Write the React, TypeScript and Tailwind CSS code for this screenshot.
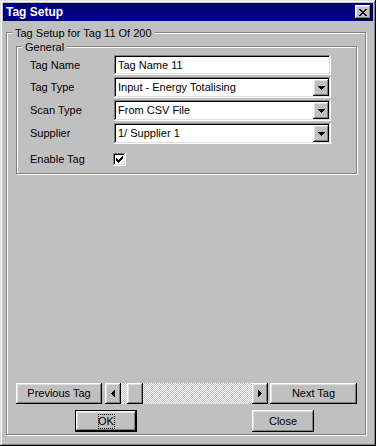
import React from 'react';

const raised =
    'shadow-[inset_-1px_-1px_#000,inset_1px_1px_#fff,inset_-2px_-2px_#808080,inset_2px_2px_#dfdfdf]';
const sunken =
    'shadow-[inset_-1px_-1px_#fff,inset_1px_1px_#808080,inset_-2px_-2px_#dfdfdf,inset_2px_2px_#000]';
const etched = 'border border-[#808080] shadow-[inset_1px_1px_#fff,1px_1px_#fff]';

// pixel glyphs drawn as tiny rect grids
const Pixels = ({ rows }: { rows: string[] }) => (
    <svg width={rows[0].length} height={rows.length} shapeRendering="crispEdges">
        {rows.map((r, y) =>
            r.split('').map((c, x) => (c === 'X' ? <rect key={x + '-' + y} x={x} y={y} width={1} height={1} fill="#000" /> : null))
        )}
    </svg>
);

const closeX = ['XX....XX', '.XX..XX.', '..XXXX..', '...XX...', '..XXXX..', '.XX..XX.', 'XX....XX'];
const downArrow = ['XXXXXXX', '.XXXXX.', '..XXX..', '...X...'];
const leftArrow = ['...X', '..XX', '.XXX', 'XXXX', '.XXX', '..XX', '...X'];
const rightArrow = ['X...', 'XX..', 'XXX.', 'XXXX', 'XXX.', 'XX..', 'X...'];
const check = ['......X', '.....XX', 'X...XXX', 'XX.XXX.', 'XXXXX..', '.XXX...', '..X....'];

const Label = ({ children }: { children: React.ReactNode }) => (
    <span className="w-[84px] shrink-0">{children}</span>
);

const Combo = ({ value }: { value: string }) => (
    <div className={`relative w-[217px] h-[21px] bg-white flex items-center pl-[4px] ${sunken}`}>
        <span className="flex-1">{value}</span>
        <div className={`w-[16px] h-[17px] mr-[2px] bg-[#c0c0c0] flex items-center justify-center ${raised}`}>
            <Pixels rows={downArrow} />
        </div>
    </div>
);

const TagSetup = () => {
    return (
        <div className="min-h-screen bg-white">
            <div
                className={`w-[376px] h-[446px] bg-[#c0c0c0] p-[3px] flex flex-col text-[11px] text-black font-['Liberation_Sans',Arial,sans-serif] shadow-[inset_-1px_-1px_#000,inset_1px_1px_#dfdfdf,inset_-2px_-2px_#808080,inset_2px_2px_#fff]`}
            >
                {/* Title bar */}
                <div className="h-[18px] bg-[#000080] flex items-center justify-between pl-[3px] pr-[2px]">
                    <span className="text-white font-bold text-[12px]">Tag Setup</span>
                    <div className={`w-[16px] h-[14px] bg-[#c0c0c0] flex items-center justify-center ${raised}`}>
                        <Pixels rows={closeX} />
                    </div>
                </div>

                {/* Body */}
                <div className="flex-1 flex flex-col pt-[11px] pl-[3px] pr-[7px] pb-[8px]">
                    <div className={`relative flex-1 flex flex-col pt-[13px] pb-[2px] ${etched}`}>
                        <span className="absolute -top-[8px] left-[5px] px-[3px] bg-[#c0c0c0]">
                            Tag Setup for Tag 11 Of 200
                        </span>

                        {/* General group */}
                        <div className="pl-[9px] pr-[8px]">
                            <div className={`relative h-[128px] pt-[8px] pl-[13px] flex flex-col gap-[2px] ${etched}`}>
                                <span className="absolute -top-[8px] left-[5px] px-[3px] bg-[#c0c0c0]">General</span>

                                <div className="flex items-center">
                                    <Label>Tag Name</Label>
                                    <div className={`w-[217px] h-[20px] bg-white flex items-center pl-[4px] ${sunken}`}>
                                        Tag Name 11
                                    </div>
                                </div>
                                <div className="flex items-center">
                                    <Label>Tag Type</Label>
                                    <Combo value="Input - Energy Totalising" />
                                </div>
                                <div className="flex items-center">
                                    <Label>Scan Type</Label>
                                    <Combo value="From CSV File" />
                                </div>
                                <div className="flex items-center">
                                    <Label>Supplier</Label>
                                    <Combo value="1/ Supplier 1" />
                                </div>
                                <div className="flex items-center mt-[6px] h-[14px]">
                                    <span className="w-[83px] shrink-0">Enable Tag</span>
                                    <div className={`w-[13px] h-[13px] bg-white flex items-center justify-center ${sunken}`}>
                                        <Pixels rows={check} />
                                    </div>
                                </div>
                            </div>
                        </div>

                        <div className="flex-1" />

                        {/* Navigation row */}
                        <div className="flex h-[21px] pl-[9px] mb-[6px]">
                            <div className={`w-[86px] flex items-center justify-center ${raised}`}>Previous Tag</div>
                            <div className="w-[163px] ml-[3px] flex">
                                <div className={`w-[16px] flex items-center justify-center ${raised}`}>
                                    <Pixels rows={leftArrow} />
                                </div>
                                <div className="flex-1 pl-[6px] bg-[repeating-conic-gradient(#c0c0c0_0_25%,#fff_0_50%)] bg-[length:2px_2px]">
                                    <div className={`w-[16px] h-full bg-[#c0c0c0] ${raised}`} />
                                </div>
                                <div className={`w-[16px] flex items-center justify-center ${raised}`}>
                                    <Pixels rows={rightArrow} />
                                </div>
                            </div>
                            <div className={`w-[87px] ml-[2px] flex items-center justify-center ${raised}`}>Next Tag</div>
                        </div>

                        {/* OK / Close */}
                        <div className="flex h-[22px] pl-[68px]">
                            <div className={`w-[62px] flex items-center justify-center border border-black ${raised}`}>
                                <span className="w-[17px] h-[15px] flex items-center justify-center border border-dotted border-black">OK</span>
                            </div>
                            <div className={`w-[62px] ml-[115px] flex items-center justify-center ${raised}`}>Close</div>
                        </div>
                    </div>
                </div>
            </div>
        </div>
    );
};

export default TagSetup;
